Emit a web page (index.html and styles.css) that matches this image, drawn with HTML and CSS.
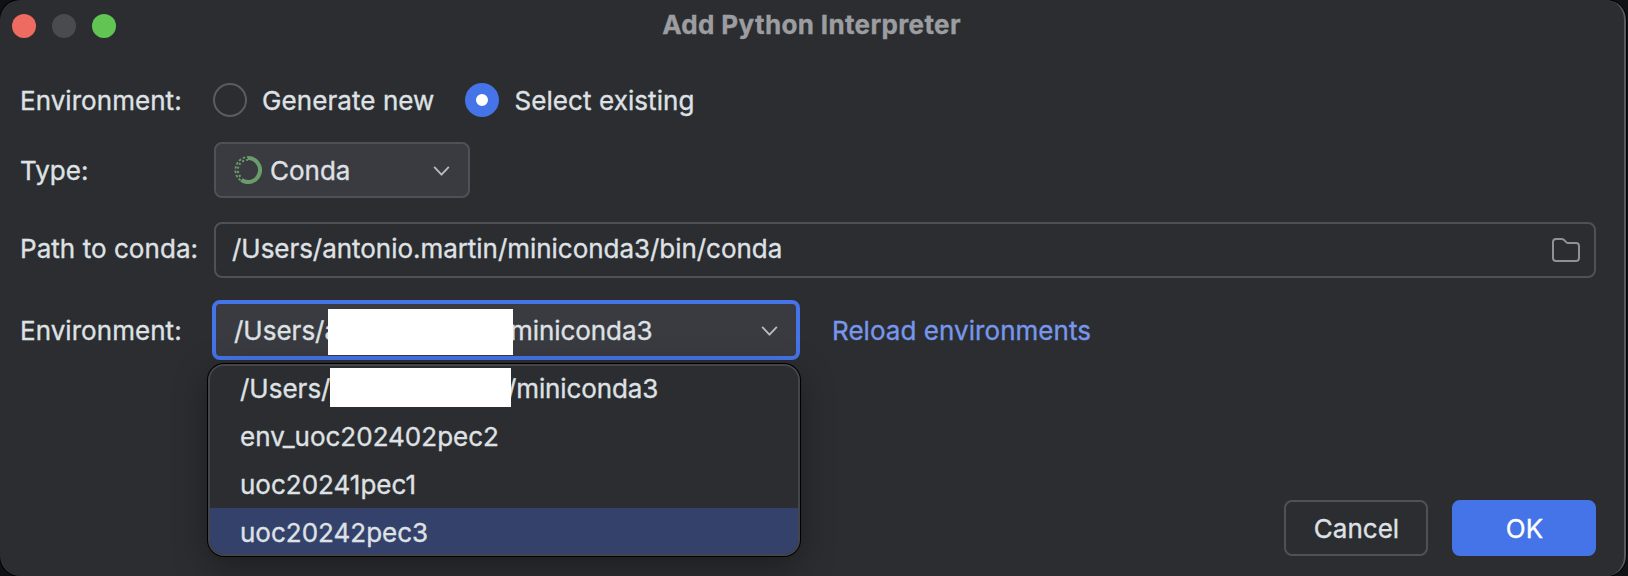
FILE: index.html
```
<!DOCTYPE html>
<html lang="en">
<head>
<meta charset="utf-8">
<title>Add Python Interpreter</title>
<link rel="stylesheet" href="styles.css">
</head>
<body>
<main class="dialog">
  <header class="titlebar">
    <div class="lights"><span class="light close"></span><span class="light minimize"></span><span class="light maximize"></span></div>
    <h1 class="title">Add Python Interpreter</h1>
  </header>
  <section class="form">
    <div class="row row-mode">
      <span class="label">Environment:</span>
      <div class="radios">
        <label class="option"><span class="radio"></span><span class="text">Generate new</span></label>
        <label class="option"><span class="radio checked"></span><span class="text">Select existing</span></label>
      </div>
    </div>
    <div class="row row-type">
      <span class="label">Type:</span>
      <div class="field type-select">
        <svg class="conda" viewBox="0 0 28 28" fill="none" stroke="#6a9d69">
          <path d="M14 2A12 12 0 1 1 7.4 24" stroke-width="4"/>
          <path d="M6.6 24.4A13 13 0 0 1 14 1" stroke-width="1.8" stroke-dasharray="2.6 1.8"/>
          <path d="M8 22.2A10.2 10.2 0 0 1 14 3.8" stroke-width="2" stroke-dasharray="2 2.2" stroke-dashoffset="2"/>
        </svg>
        <span class="text">Conda</span>
        <svg class="chevron" viewBox="0 0 18 12"><path d="M1.5 1.5 9 9.5l7.5-8"/></svg>
      </div>
    </div>
    <div class="row row-path">
      <span class="label">Path to conda:</span>
      <div class="field path-input">
        <span class="path-text">/Users/antonio.martin/miniconda3/bin/conda</span>
        <svg class="folder" viewBox="0 0 28 24"><path d="M1 4a3 3 0 0 1 3-3h5.8c.8 0 1.4.3 2 .8l2.7 2.6c.4.4.8.6 1.4.6H24a3 3 0 0 1 3 3v12a3 3 0 0 1-3 3H4a3 3 0 0 1-3-3z"/></svg>
      </div>
    </div>
    <div class="row row-env">
      <span class="label">Environment:</span>
      <div class="combo">
        <div class="field env-select">
          <span class="text head">/Users/a</span><span class="mask mask-field"></span><span class="text tail">miniconda3</span>
          <svg class="chevron" viewBox="0 0 18 12"><path d="M1.5 1.5 9 9.5l7.5-8"/></svg>
        </div>
        <div class="popup">
          <div class="item"><span class="user">/Users/</span><span class="mask mask-item"></span><span class="mini">/miniconda3</span></div>
          <div class="item"><span class="text">env_uoc202402pec2</span></div>
          <div class="item"><span class="text">uoc20241pec1</span></div>
          <div class="item selected"><span class="text">uoc20242pec3</span></div>
        </div>
      </div>
      <a class="reload text">Reload environments</a>
    </div>
  </section>
  <footer class="actions">
    <button class="btn"><span class="text">Cancel</span></button>
    <button class="btn primary"><span class="text">OK</span></button>
  </footer>
</main>
</body>
</html>
```
FILE: styles.css
```
* { box-sizing: border-box; }
body {
  margin: 0;
  height: 576px;
  overflow: hidden;
  background: #101113;
  font-family: Inter, "Liberation Sans", sans-serif;
  font-size: 26px;
  line-height: 32px;
  color: #dfe1e5;
  -webkit-text-stroke: 0.35px currentColor;
}
.dialog {
  display: flex;
  flex-direction: column;
  width: 1626px;
  height: 576px;
  background: #2b2d30;
  border-right: 2px solid #58595c;
  border-radius: 20px;
  box-shadow: 0 0 0 1px #000;
  white-space: nowrap;
}
.titlebar {
  display: grid;
  grid-template-columns: 1fr auto 1fr;
  align-items: center;
  height: 52px;
  padding-left: 12px;
  padding-right: 13px;
}
.lights { display: flex; gap: 16px; }
.light { width: 24px; height: 24px; border-radius: 50%; }
.close { background: #ed6b60; }
.minimize { background: #4a4b4d; }
.maximize { background: #61c554; }
.title {
  margin: 0 0 2px;
  font-size: 26px;
  font-weight: 700;
  color: #9c9da0;
  letter-spacing: 0.35px;
}
.form { flex: 1; padding-left: 20px; }
.row { display: flex; align-items: center; }
.label { width: 194px; flex: none; padding-top: 2px; letter-spacing: 0.05px; }
.text { padding-top: 2px; }
.row-mode { height: 36px; margin-top: 30px; }
.row-type { height: 56px; margin-top: 24px; }
.row-path { height: 56px; margin-top: 24px; }
.row-path .label { padding: 0 0 2px; }
.row-env { height: 60px; margin-top: 22px; }
.radios { display: flex; gap: 31px; margin-left: -1px; }
.option { display: flex; align-items: center; gap: 15px; letter-spacing: 0.08px; }
.radio { width: 34px; height: 34px; border: 2px solid #5a5c60; border-radius: 50%; }
.radio.checked { border: 11px solid #4573e8; background: #fff; }
.field {
  display: flex;
  align-items: center;
  height: 56px;
  border: 2px solid #4e5157;
  border-radius: 8px;
}
.type-select { width: 256px; padding: 0 18px; background: #393b40; }
.conda { width: 28px; height: 28px; margin-right: 8px; }
.chevron {
  width: 17px;
  height: 11px;
  margin-left: auto;
  margin-top: 3px;
  fill: none;
  stroke: #b9bbc0;
  stroke-width: 2;
  stroke-linecap: round;
  stroke-linejoin: round;
}
.path-input { width: 1382px; padding: 0 14px 0 16px; }
.path-text { padding-bottom: 2px; letter-spacing: -0.04px; }
.folder { width: 28px; height: 24px; margin-left: auto; fill: none; stroke: #8f9196; stroke-width: 2; }
.combo { position: relative; margin-left: -2px; width: 588px; }
.env-select {
  height: 60px;
  padding: 0 18px;
  border: 4px solid #4573e8;
  background: #393b40;
}
.head { width: 94px; }
.mask { position: relative; z-index: 1; flex: none; background: #fff; }
.mask-field { width: 185px; height: 46px; margin-top: 4px; }
.tail { margin-left: -3px; letter-spacing: -0.07px; }
.popup {
  position: absolute;
  left: -4px;
  top: 64px;
  width: 592px;
  height: 192px;
  overflow: hidden;
  border: 2px solid #43454a;
  border-radius: 16px;
  background: #2b2d30;
  box-shadow: 0 0 0 1px #000, 0 10px 34px rgba(0, 0, 0, 0.35);
}
.item { display: flex; align-items: center; height: 48px; padding-left: 30px; }
.item:first-child { height: 46px; }
.item.selected { height: 46px; background: #33416b; }
.item.selected .text { padding-top: 3px; }
.user { width: 90px; }
.mask-item { width: 181px; height: 39px; margin-top: -3px; }
.mini { margin-left: -4px; letter-spacing: -0.12px; }
.reload { margin-left: 32px; color: #7797ec; letter-spacing: 0.05px; }
.actions { display: flex; justify-content: flex-end; gap: 24px; padding: 0 28px 20px 0; }
.btn {
  display: flex;
  align-items: center;
  justify-content: center;
  width: 144px;
  height: 56px;
  padding: 0 0 0 1px;
  border: 2px solid #4e5157;
  border-radius: 8px;
  background: none;
  color: inherit;
  font: inherit;
}
.btn.primary { border-color: #4573e8; background: #4573e8; color: #fff; }
```
